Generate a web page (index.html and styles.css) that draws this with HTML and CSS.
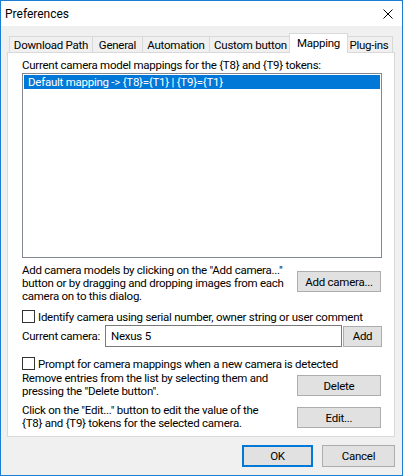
FILE: index.html
```html
<!DOCTYPE html>
<html>
<head>
<meta charset="utf-8">
<link rel="stylesheet" href="styles.css">
</head>
<body>
<div class="window">
  <div class="titlebar">
    <span class="title">Preferences</span>
    <svg class="close" width="10" height="10" viewBox="0 0 10 10"><path d="M0.5 0.5 L9.5 9.5 M9.5 0.5 L0.5 9.5" stroke="#000" stroke-width="1" fill="none"/></svg>
  </div>
  <div class="client">
    <div class="tabs">
      <div class="tab t-dl">Download Path</div>
      <div class="tab t-gen">General</div>
      <div class="tab t-auto">Automation</div>
      <div class="tab t-cust">Custom button</div>
      <div class="tab t-map active">Mapping</div>
      <div class="tab t-plug">Plug-ins</div>
    </div>
    <div class="panel">
      <div class="toplabel">Current camera model mappings for the {T8} and {T9} tokens:</div>
      <div class="list">
        <div class="item selected">Default mapping -&gt; {T8}={T1} | {T9}={T1}</div>
      </div>
      <div class="row row-add">
        <p class="desc">Add camera models by clicking on the "Add camera..."<br>button or by dragging and dropping images from each<br>camera on to this dialog.</p>
        <div class="btn side">Add camera...</div>
      </div>
      <div class="check check-1"><span class="box"></span><span>Identify camera using serial number, owner string or user comment</span></div>
      <div class="current">
        <span class="curlabel">Current camera:</span>
        <div class="input">Nexus 5</div>
        <div class="btn add">Add</div>
      </div>
      <div class="check check-2"><span class="box"></span><span>Prompt for camera mappings when a new camera is detected</span></div>
      <div class="row row-del">
        <p class="desc two">Remove entries from the list by selecting them and<br>pressing the "Delete button".</p>
        <div class="btn side">Delete</div>
      </div>
      <div class="row row-edit">
        <p class="desc two">Click on the "Edit..." button to edit the value of the<br>{T8} and {T9} tokens for the selected camera.</p>
        <div class="btn side">Edit...</div>
      </div>
    </div>
    <div class="footer">
      <div class="btn ok">OK</div>
      <div class="btn cancel">Cancel</div>
    </div>
  </div>
</div>
</body>
</html>
```
FILE: styles.css
```css
* { box-sizing: border-box; }
html, body { margin: 0; padding: 0; background: #f0f0f0; }
body {
  font-family: Roboto, "Liberation Sans", sans-serif;
  font-size: 11.5px;
  letter-spacing: -0.25px;
  color: #000;
}
.window {
  width: 403px;
  height: 476px;
  border: 1px solid #1a7fd3;
  background: #f0f0f0;
  display: flex;
  flex-direction: column;
}
.titlebar {
  height: 25px;
  background: #fff;
  display: flex;
  align-items: center;
  padding: 0 9px 0 4px;
  flex-shrink: 0;
}
.title { font-size: 12px; letter-spacing: 0; flex: 1; }
.close { display: block; }
.client {
  flex: 1;
  padding: 7px 7px 0 6px;
  display: flex;
  flex-direction: column;
}
.tabs {
  height: 20px;
  display: flex;
  align-items: flex-end;
  padding-left: 2px;
  margin-bottom: -1px;
  position: relative;
  z-index: 1;
}
.tab {
  height: 16px;
  margin-bottom: 1px;
  border: 1px solid #d9d9d9;
  border-bottom: none;
  background: #f0f0f0;
  text-align: center;
  line-height: 16px;
  white-space: nowrap;
  margin-left: -1px;
}
.t-dl { width: 84px; margin-left: 0; }
.t-gen { width: 51px; }
.t-auto { width: 68px; }
.t-cust { width: 83px; }
.t-map { width: 59px; margin-left: -3px; }
.t-plug { width: 48px; margin-left: -3px; }
.tab.active {
  height: 20px;
  margin-bottom: 0;
  background: #fff;
  line-height: 18px;
  position: relative;
  z-index: 2;
}
.panel {
  width: 388px;
  height: 385px;
  background: #fff;
  border: 1px solid #d9d9d9;
  padding: 0 13px 0 14px;
  display: flex;
  flex-direction: column;
}
.toplabel {
  margin-top: 5px;
  line-height: 14px;
  height: 14px;
  white-space: nowrap;
}
.list {
  margin-top: 1px;
  width: 360px;
  height: 185px;
  border: 1px solid #828790;
  padding: 1px;
  background: #fff;
}
.item {
  height: 14px;
  line-height: 14px;
  padding-left: 4px;
  white-space: nowrap;
}
.item.selected { background: #0078d7; color: #fff; }
.row {
  display: flex;
  align-items: flex-start;
}
.desc {
  margin: 0;
  line-height: 13px;
  white-space: nowrap;
  flex: 1;
}
.row-add { margin-top: 6px; }
.row-add .side { margin-top: 7px; }
.row-del { margin-top: 2px; }
.row-edit { margin-top: 6px; }
.row-del .side, .row-edit .side { margin-top: 3px; }
.btn {
  background: #e1e1e1;
  border: 1px solid #adadad;
  display: flex;
  align-items: center;
  justify-content: center;
  white-space: nowrap;
}
.side { width: 84px; height: 21px; flex-shrink: 0; }
.check {
  display: flex;
  align-items: center;
  height: 13px;
  white-space: nowrap;
}
.check .box {
  width: 13px;
  height: 13px;
  border: 1px solid #333;
  background: #fff;
  margin-right: 3px;
  flex-shrink: 0;
}
.check-1 { margin-top: 7px; }
.check-2 { margin-top: 10px; }
.current {
  margin-top: 2px;
  display: grid;
  grid-template-columns: 82px 237px 39px;
  column-gap: 1px;
  align-items: center;
  height: 22px;
}
.curlabel { white-space: nowrap; }
.input {
  height: 22px;
  border: 1px solid #7a7a7a;
  background: #fff;
  padding-left: 5px;
  display: flex;
  align-items: center;
}
.add { height: 21px; }
.footer {
  margin-top: 8px;
  display: flex;
  justify-content: flex-end;
  gap: 9px;
}
.ok { width: 71px; height: 22px; border: 2px solid #0078d7; }
.cancel { width: 73px; height: 22px; }
```
